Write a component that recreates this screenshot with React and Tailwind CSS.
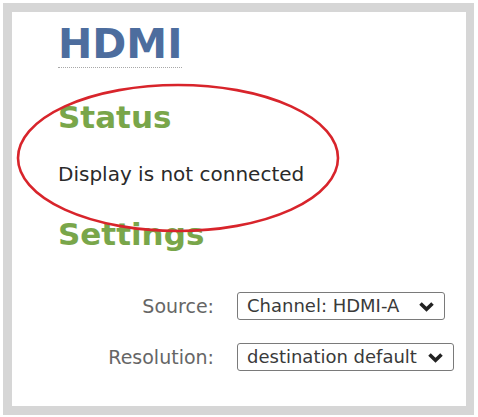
import React from 'react';

// Chevron glyph used by the fake select boxes
function Chevron() {
  return (
    <svg width="17" height="11" viewBox="0 0 17 11" className="shrink-0">
      <path d="M2.5 2.5 L8.5 8.3 L14.5 2.5" fill="none" stroke="#222" strokeWidth="3.6" strokeLinejoin="miter" />
    </svg>
  );
}

function SelectBox({ value, width }) {
  return (
    <div
      className={`flex h-[28px] items-center justify-between rounded-[3px] border border-[#7a7a7a] bg-white pl-[9px] pr-[9px] text-[18px] leading-none text-[#3a3a3a] ${width}`}
    >
      <span className="whitespace-nowrap">{value}</span>
      <Chevron />
    </div>
  );
}

export default function App() {
  const rows = [
    { label: 'Source:', value: 'Channel: HDMI-A', width: 'w-[208px]' },
    { label: 'Resolution:', value: 'destination default', width: 'w-[217px]' },
  ];

  return (
    <div className="h-[417px] w-[478px] bg-white p-[3px] font-['DejaVu_Sans',Verdana,sans-serif]">
      <div className="relative h-[412px] w-[471px] border-[9px] border-r-[8px] border-[#d6d6d6] bg-white pl-[46px]">
        <div className="pt-[12px]">
          <span className="inline-block border-b border-dotted border-[#a8a8a8] pb-[2px] text-[41px] font-bold leading-none text-[#4d6d9e]">
            HDMI
          </span>
        </div>

        <h2 className="mt-[34px] text-[31px] font-bold leading-none text-[#79a64a]">Status</h2>
        <p className="mt-[31px] text-[20px] leading-none text-[#2a2a2a]">Display is not connected</p>

        <h2 className="mt-[35px] text-[31px] font-bold leading-none text-[#79a64a]">Settings</h2>

        <div className="mt-[42px] flex flex-col gap-[23px]">
          {rows.map((r) => (
            <div key={r.label} className="flex items-center">
              <span className="w-[156px] text-right text-[19px] leading-none text-[#666]">{r.label}</span>
              <div className="ml-[23px]">
                <SelectBox value={r.value} width={r.width} />
              </div>
            </div>
          ))}
        </div>

        {/* hand-drawn annotation circle over the status block */}
        <svg className="pointer-events-none absolute left-[-9px] top-[-9px]" width="471" height="412">
          <ellipse cx="175" cy="155" rx="160" ry="73" fill="none" stroke="#d8242b" strokeWidth="2.6" />
        </svg>
      </div>
    </div>
  );
}
